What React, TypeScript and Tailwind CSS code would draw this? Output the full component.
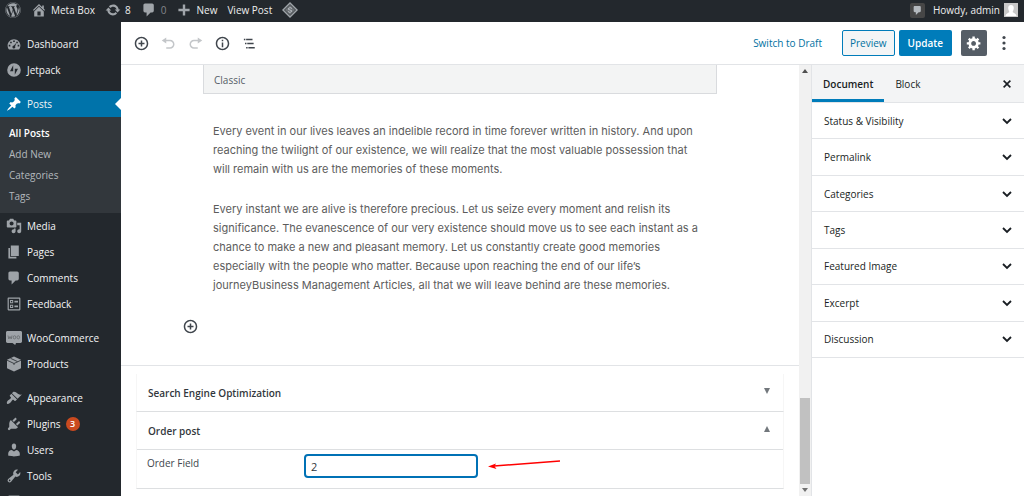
import { useState } from "react";
import type { ReactNode } from "react";
import clsx from "clsx";
import { FaWordpress } from "react-icons/fa";

const paths = {
  post: "M10.44 3.02l1.82-1.82 6.36 6.35-1.83 1.82c-1.05-.68-2.48-.57-3.41.36l-.75.75c-.92.93-1.04 2.35-.35 3.41l-1.83 1.82-2.41-2.41-2.8 2.79c-.42.42-3.38 2.71-3.8 2.29s1.86-3.39 2.28-3.81l2.79-2.79L4.1 9.36l1.83-1.82c1.05.69 2.48.57 3.4-.36l.75-.75c.93-.92 1.05-2.35.36-3.41z",
  comment: "M5 2h9c1.1 0 2 .9 2 2v7c0 1.1-.9 2-2 2h-2l-5 5v-5H5c-1.1 0-2-.9-2-2V4c0-1.1.9-2 2-2z",
  page: "M6 15V2h10v13H6zm-1 1h8v2H3V5h2v11z",
  users:
    "M10 9.25c-2.27 0-2.73-3.44-2.73-3.44C7 4.02 7.82 2 9.97 2c2.16 0 2.98 2.02 2.71 3.81 0 0-.41 3.44-2.68 3.44zm0 2.57L12.72 10c2.39 0 4.52 2.33 4.52 4.53v2.49s-3.65 1.13-7.24 1.13c-3.65 0-7.24-1.13-7.24-1.13v-2.49c0-2.25 1.94-4.48 4.47-4.48z",
  tools:
    "M16.68 9.77c-1.34 1.34-3.3 1.67-4.95.99l-5.41 6.52c-.99.99-2.59.99-3.58 0s-.99-2.59 0-3.57l6.52-5.42c-.68-1.65-.35-3.61.99-4.95 1.28-1.28 3.12-1.62 4.72-1.06l-2.89 2.89 2.82 2.82 2.86-2.87c.53 1.58.18 3.39-1.08 4.65zM3.81 16.21c.4.39 1.04.39 1.43 0 .4-.4.4-1.04 0-1.43-.39-.4-1.03-.4-1.43 0-.39.39-.39 1.03 0 1.43z",
  plugins:
    "M13.11 4.36L9.87 7.6 8 5.73l3.24-3.24c.35-.34 1.05-.2 1.56.32.52.51.66 1.21.31 1.55zm-8 1.77l.91-1.12 9.01 9.01-1.19.84c-.71.71-2.63 1.16-3.82 1.16H6.14L4.9 17.26c-.59.59-1.54.59-2.12 0-.59-.58-.59-1.53 0-2.12l1.24-1.24v-3.88c0-1.13.4-3.19 1.09-3.89zm7.26 3.97l3.24-3.24c.34-.35 1.04-.21 1.55.31.52.51.66 1.21.31 1.55l-3.24 3.25z",
  appearance:
    "M14.48 11.06L7.41 3.99l1.5-1.5c.5-.56 2.3-.47 3.51.32 1.21.8 1.43 1.28 2.91 2.1 1.18.64 2.45 1.26 4.45.85zm-.71.71L6.7 4.7 4.93 6.47c-.39.39-.39 1.02 0 1.41l1.06 1.06c.39.39.39 1.03 0 1.42-.6.6-1.43 1.11-2.21 1.69-.35.26-.7.53-1.01.84C1.43 14.23.4 16.08 1.4 17.07c.99 1 2.84-.03 4.18-1.36.31-.31.58-.66.85-1.02.57-.78 1.08-1.61 1.69-2.21.39-.39 1.02-.39 1.41 0l1.06 1.06c.39.39 1.02.39 1.41 0z",
  media:
    "M13 11V4c0-.55-.45-1-1-1h-1.67L9 1H5L3.67 3H2c-.55 0-1 .45-1 1v7c0 .55.45 1 1 1h10c.55 0 1-.45 1-1zM7 4.5c1.38 0 2.5 1.12 2.5 2.5S8.38 9.5 7 9.5 4.5 8.38 4.5 7 5.62 4.5 7 4.5zM14 6h5v10.5c0 1.38-1.12 2.5-2.5 2.5S14 17.88 14 16.5s1.12-2.5 2.5-2.5c.17 0 .34.02.5.05V9h-3V6zm-4 8.05V13h2v3.5c0 1.38-1.12 2.5-2.5 2.5S7 17.88 7 16.5 8.12 14 9.5 14c.17 0 .34.02.5.05z",
  dashboard:
    "M3.76 17h12.48c1.1-1.38 1.76-3.12 1.76-5.01 0-4.41-3.58-8-8-8s-8 3.59-8 8c0 1.89.66 3.63 1.76 5.01zM9 5.5h2v2H9zM5.2 7.2h2v2h-2zM12.8 7.2h2v2h-2zM3.4 11h2v2h-2zM14.6 11h2v2h-2zM13 8.3l-1.6 4.6a1.8 1.8 0 1 1-1.5-.9z",
  home: "M16 8.5l1.53 1.53-1.06 1.06L10 4.6l-6.47 6.49-1.06-1.06L10 2.5l4 4v-2h2v4zm-6-2.46l6 5.99V18H4v-5.97zM12 17v-5H8v5h4z",
  update:
    "M10.2 3.28c3.53 0 6.43 2.61 6.92 6h2.08l-3.5 4-3.5-4h2.32c-.45-1.97-2.21-3.45-4.32-3.45-1.45 0-2.73.71-3.54 1.78L4.95 5.66C6.23 4.2 8.11 3.28 10.2 3.28zm-.4 13.44c-3.52 0-6.43-2.61-6.92-6H.8l3.5-4c1.17 1.33 2.33 2.67 3.5 4H5.48c.45 1.97 2.21 3.45 4.32 3.45 1.45 0 2.73-.71 3.54-1.78l1.71 1.95c-1.28 1.46-3.15 2.38-5.25 2.38z",
  plus: "M17 8.5v3h-5.5V17h-3v-5.5H3v-3h5.5V3h3v5.5z",
  insert:
    "M10 1c-5 0-9 4-9 9s4 9 9 9 9-4 9-9-4-9-9-9zm0 16c-3.9 0-7-3.1-7-7s3.1-7 7-7 7 3.1 7 7-3.1 7-7 7zm1-11H9v3H6v2h3v3h2v-3h3V9h-3V6z",
  info: "M10 1c-5 0-9 4-9 9s4 9 9 9 9-4 9-9-4-9-9-9zm0 16c-3.9 0-7-3.1-7-7s3.1-7 7-7 7 3.1 7 7-3.1 7-7 7zM9 5h2v2H9zM9 8.5h2V15H9z",
  undo: "M12 5H7V2L1 6l6 4V7h5c2.2 0 4 1.8 4 4s-1.8 4-4 4H7v2h5c3.3 0 6-2.7 6-6s-2.7-6-6-6z",
  redo: "M8 5h5V2l6 4-6 4V7H8c-2.2 0-4 1.8-4 4s1.8 4 4 4h5v2H8c-3.3 0-6-2.7-6-6s2.7-6 6-6z",
  outline: "M2.5 3.500h2v2h-2zM5.500 3.500h8.500v2H5.500zM4 9h2v2H4zM7 9h8.500v2H7zM5.500 14.500h2v2h-2zM8.500 14.500H17v2H8.500z",
  gear: "M18 12h-2.180c-.17.7-.44 1.350-.81 1.930l1.540 1.540-2.100 2.100-1.540-1.540c-.58.36-1.230.63-1.910.79V19H8v-2.180c-.68-.16-1.330-.43-1.910-.79l-1.540 1.540-2.120-2.120 1.540-1.540c-.36-.58-.63-1.230-.79-1.910H1V9.030h2.170c.16-.7.44-1.350.8-1.940L2.430 5.550l2.100-2.100 1.540 1.540c.58-.37 1.240-.64 1.930-.81V2h3v2.180c.68.16 1.330.43 1.910.79l1.540-1.540 2.120 2.120-1.540 1.540c.36.59.64 1.240.8 1.940H18V12zm-8.500 1.500c1.660 0 3-1.340 3-3s-1.340-3-3-3-3 1.340-3 3 1.340 3 3 3z",
  close:
    "M14.950 6.460L11.410 10l3.540 3.540-1.410 1.410L10 11.420l-3.530 3.530-1.420-1.420L8.580 10 5.050 6.470l1.420-1.420L10 8.580l3.540-3.530z",
  jetpack: "M10 1.500a8.500 8.500 0 1 0 0 17 8.500 8.500 0 0 0 0-17zM9 11.500H5L9 4zM11 16V8.500h4z",
  feedback:
    "M3 2h14c.6 0 1 .4 1 1v14c0 .6-.4 1-1 1H3c-.6 0-1-.4-1-1V3c0-.6.4-1 1-1zm.5 1.500v13h13v-13zM5 5h4v4H5zm1.200 1.200v1.600h1.600V6.200zM5 11h4v4H5zm1.200 1.200v1.600h1.600v-1.600zM10.500 6H15v2h-4.500zM10.500 12H15v2h-4.500z",
  settings: "M4 2h12c.6 0 1 .4 1 1v14c0 .6-.4 1-1 1H4c-.6 0-1-.4-1-1V3c0-.6.4-1 1-1z",
};

type IconName = keyof typeof paths;

const Icon = ({ name, className = "size-4" }: { name: IconName; className?: string }) => (
  <svg viewBox="0 0 20 20" fill="currentColor" fillRule="evenodd" className={clsx("shrink-0", className)} aria-hidden="true">
    <path d={paths[name]} />
  </svg>
);

const WooIcon = () => (
  <svg viewBox="0 0 16 16" className="size-4 shrink-0" aria-hidden="true">
    <path fill="currentColor" d="M1.500 1h13c.8 0 1.500.6 1.500 1.400v9.200c0 .8-.7 1.400-1.500 1.400H10l-.8 2-2.700-2h-5C.7 13 0 12.400 0 11.600V2.400C0 1.600.7 1 1.500 1z" />
    <path fill="none" stroke="#6c7074" strokeWidth=".9" d="M2 5.500l.8 3.500 1.200-2.500L5.200 9 6 5.500" />
    <ellipse cx="8.500" cy="7.300" rx="1.300" ry="1.600" fill="none" stroke="#6c7074" strokeWidth=".9" />
    <ellipse cx="12.300" cy="7.300" rx="1.300" ry="1.600" fill="none" stroke="#6c7074" strokeWidth=".9" />
  </svg>
);

const ProductsIcon = () => (
  <svg viewBox="0 0 16 16" className="size-4 shrink-0" aria-hidden="true">
    <path fill="currentColor" d="M8 .5l7 3.300v8.400l-7 3.300-7-3.300V3.800z" />
    <path fill="none" stroke="#23282d" strokeWidth=".8" d="M1 4.200l7 3.300 7-3.300M4.500 2.300l7 3.300M8 7.500v1.500" />
  </svg>
);

interface MenuItemProps {
  label?: string;
  icon: ReactNode;
  active?: boolean;
  count?: number;
}

const MenuItem = ({ label, icon, active, count }: MenuItemProps) => (
  <li>
    <a
      href="#"
      className={clsx("relative flex h-[26px] items-center gap-[5px] pl-[6px]", active ? "bg-[#0073aa] text-white" : "text-[#9ea3a8]")}
    >
      {icon}
      <span className="text-[#f3f4f5]">{label}</span>
      {count && (
        <span className="flex size-[14px] items-center justify-center rounded-full bg-[#ca4a1f] text-[9px] font-semibold text-white">{count}</span>
      )}
      {active && <span className="absolute right-0 border-y-[6px] border-r-[6px] border-y-transparent border-r-white" />}
    </a>
  </li>
);

const AdminBar = () => (
  <header className="flex h-[22px] shrink-0 items-center justify-between bg-[#23282d] pr-[6px] pb-[2px] pl-[5px] font-medium text-[#eeeeee]">
    <nav className="flex items-center" aria-label="Toolbar">
      <a href="#" aria-label="About WordPress" className="mr-[10px] text-[#a0a5aa]">
        <FaWordpress className="size-4" />
      </a>
      <a href="#" className="mr-[10px] flex items-center gap-1">
        <Icon name="home" className="size-4 text-[#a0a5aa]" />
        Meta Box
      </a>
      <a href="#" className="mr-[10px] flex items-center gap-1">
        <Icon name="update" className="size-4 text-[#a0a5aa]" />8
      </a>
      <a href="#" className="mr-[10px] flex items-center gap-1 text-[#83878b]">
        <Icon name="comment" className="size-4 text-[#a0a5aa]" />0
      </a>
      <a href="#" className="mr-[10px] flex items-center gap-1">
        <Icon name="plus" className="size-4 text-[#a0a5aa]" />
        New
      </a>
      <a href="#" className="mr-[10px]">
        View Post
      </a>
      <a href="#" aria-label="Performance">
        <svg viewBox="0 0 16 16" className="size-4" aria-hidden="true">
          <path fill="#a0a5aa" d="M8 0l8 8-8 8-8-8z" />
          <path fill="#6d7276" stroke="#3c4145" d="M8 2.500L13.500 8 8 13.500 2.500 8z" />
          <path fill="none" stroke="#b4b9be" d="M10 6.500L8 5.500 6 7l4 2-2 1.500-2-1" />
        </svg>
      </a>
    </nav>
    <div className="flex items-center gap-2">
      <a href="#" aria-label="Notifications" className="flex size-[15px] items-center justify-center rounded-xs bg-[#464646] text-[#b4b9be]">
        <Icon name="comment" className="size-[11px]" />
      </a>
      <a href="#" className="flex items-center gap-1">
        Howdy, admin
        <svg viewBox="0 0 14 14" className="size-[14px]" aria-hidden="true">
          <path fill="#c8c8c8" d="M0 0h14v14H0z" />
          <path fill="#fff" d="M7 2c1.700 0 2.800 1.200 2.800 3S8.700 8.300 8.700 9c0 .8 3.300 1 3.800 4H1.500c.5-3 3.800-3.200 3.800-4 0-.7-1.100-2.200-1.100-4S5.300 2 7 2z" />
        </svg>
      </a>
    </div>
  </header>
);

const AdminMenu = () => (
  <nav className="w-[121px] shrink-0 overflow-hidden bg-[#23282d] pt-[9px] font-medium" aria-label="Main menu">
    <ul>
      <MenuItem label="Dashboard" icon={<Icon name="dashboard" />} />
      <MenuItem label="Jetpack" icon={<Icon name="jetpack" />} />
    </ul>
    <ul className="mt-2">
      <MenuItem label="Posts" icon={<Icon name="post" />} active />
      <li>
        <ul className="bg-[#32373c] pt-[5px] pb-[7px] font-normal text-[#b4b9be]">
          {["All Posts", "Add New", "Categories", "Tags"].map((item, i) => (
            <li key={item}>
              <a href="#" className={clsx("flex h-[21px] items-center pl-[9px]", i === 0 && "font-semibold text-white")}>
                {item}
              </a>
            </li>
          ))}
        </ul>
      </li>
      <MenuItem label="Media" icon={<Icon name="media" />} />
      <MenuItem label="Pages" icon={<Icon name="page" />} />
      <MenuItem label="Comments" icon={<Icon name="comment" />} />
      <MenuItem label="Feedback" icon={<Icon name="feedback" />} />
    </ul>
    <ul className="mt-2">
      <MenuItem label="WooCommerce" icon={<WooIcon />} />
      <MenuItem label="Products" icon={<ProductsIcon />} />
    </ul>
    <ul className="mt-2">
      <MenuItem label="Appearance" icon={<Icon name="appearance" />} />
      <MenuItem label="Plugins" icon={<Icon name="plugins" />} count={3} />
      <MenuItem label="Users" icon={<Icon name="users" />} />
      <MenuItem label="Tools" icon={<Icon name="tools" />} />
      <MenuItem icon={<Icon name="settings" />} />
    </ul>
  </nav>
);

const tools: { name: IconName; label: string; disabled?: boolean }[] = [
  { name: "insert", label: "Add block" },
  { name: "undo", label: "Undo", disabled: true },
  { name: "redo", label: "Redo", disabled: true },
  { name: "info", label: "Content structure" },
  { name: "outline", label: "Block navigation" },
];

const EditorHeader = () => (
  <div className="flex h-[43px] shrink-0 items-center justify-between border-b border-[#e2e4e7] pr-3 pl-[7px]">
    <div className="flex">
      {tools.map((tool) => (
        <button
          key={tool.name}
          type="button"
          aria-label={tool.label}
          disabled={tool.disabled}
          className="flex h-[26px] w-[27px] items-center justify-center text-[#40464d] disabled:text-[#c3c6c9]"
        >
          <Icon name={tool.name} className="size-[15px]" />
        </button>
      ))}
    </div>
    <div className="flex items-center">
      <button type="button" className="mr-5 text-[#0071a1]">
        Switch to Draft
      </button>
      <button type="button" className="mr-1 h-[26px] rounded-xs border border-[#007cba] bg-[#f3f5f6] px-[7px] text-[#0071a1]">
        Preview
      </button>
      <button type="button" className="mr-[9px] h-[26px] rounded-xs bg-[#007cba] px-[9px] font-semibold text-white">
        Update
      </button>
      <button type="button" aria-label="Settings" className="mr-[9px] flex size-[26px] items-center justify-center rounded-xs bg-[#555d66] text-white">
        <Icon name="gear" />
      </button>
      <button type="button" aria-label="More tools" className="text-[#40464d]">
        <svg viewBox="0 0 16 16" fill="currentColor" className="size-4" aria-hidden="true">
          <circle cx="8" cy="2.500" r="1.600" />
          <circle cx="8" cy="8" r="1.600" />
          <circle cx="8" cy="13.500" r="1.600" />
        </svg>
      </button>
    </div>
  </div>
);

const MetaBoxTitle = ({ title, open }: { title: string; open?: boolean }) => (
  <h2>
    <button
      type="button"
      aria-expanded={!!open}
      className="flex h-[37px] w-full items-center justify-between pr-3 pl-[11px] font-semibold text-[#32373c]"
    >
      {title}
      <svg viewBox="0 0 6 6" className="mr-px mb-1 size-[6px] text-[#72777c]" fill="currentColor" aria-hidden="true">
        <path d={open ? "M3 0l3 6H0z" : "M0 0h6L3 6z"} />
      </svg>
    </button>
  </h2>
);

const MetaBoxes = () => {
  const [order, setOrder] = useState("2");

  return (
    <div className="border-t border-[#e2e4e7] px-[15px] pt-2 pb-[7px]">
      <section className="border-x border-b border-x-[#f6f6f6] border-b-[#dddfe1]">
        <MetaBoxTitle title="Search Engine Optimization" />
      </section>
      <section className="border-x border-b border-x-[#f6f6f6] border-b-[#dddfe1]">
        <MetaBoxTitle title="Order post" open />
        <div className="flex h-[39px] items-start border-t border-[#dddfe1] px-[10px] pt-1 text-[#40464d]">
          <label htmlFor="order-field" className="w-[157px] shrink-0 pt-px font-medium">
            Order Field
          </label>
          <input
            id="order-field"
            type="text"
            value={order}
            onChange={(e) => setOrder(e.target.value)}
            className="h-6 w-[174px] rounded-sm border-2 border-[#0071b5] px-[5px] text-[11px] text-[#32373c] outline-none"
          />
          <svg viewBox="0 0 74 16" className="mt-[2px] ml-2 h-4 w-[74px] shrink-0" aria-hidden="true">
            <path d="M8 10L74 5" stroke="#f00" strokeWidth="1.500" />
            <path d="M2 10.500L10 7.500 8.500 10.200 10.500 13z" fill="#f00" />
          </svg>
        </div>
      </section>
    </div>
  );
};

const Editor = () => (
  <main className="flex min-w-0 flex-1 flex-col bg-white">
    <div className="flex-1">
      <div className="mx-auto w-[514px] border border-t-0 border-[#d9dbde] bg-[#f3f4f4] px-[10px] pt-[7px] pb-[5px] leading-[16px] text-[#555d66]">
        Classic
      </div>
      <article className="mx-auto mt-[28px] w-[514px] space-y-[21px] px-[10px] font-['Inter',sans-serif] text-[11px] leading-[19px] whitespace-nowrap text-[#5c5c5c]">
        <p>
          Every event in our lives leaves an indelible record in time forever written in history. And upon
          <br />
          reaching the twilight of our existence, we will realize that the most valuable possession that
          <br />
          will remain with us are the memories of these moments.
        </p>
        <p>
          Every instant we are alive is therefore precious. Let us seize every moment and relish its
          <br />
          significance. The evanescence of our very existence should move us to see each instant as a
          <br />
          chance to make a new and pleasant memory. Let us constantly create good memories
          <br />
          especially with the people who matter. Because upon reaching the end of our life’s
          <br />
          journeyBusiness Management Articles, all that we will leave behind are these memories.
        </p>
      </article>
      <div className="mx-auto mt-6 w-[554px]">
        <button type="button" aria-label="Add block" className="flex text-[#40464d]">
          <Icon name="insert" className="size-[15px]" />
        </button>
      </div>
    </div>
    <MetaBoxes />
  </main>
);

const Scrollbar = () => (
  <div className="flex w-[13px] shrink-0 flex-col items-center border-r border-[#e2e4e7] bg-[#f1f1f1] py-1" aria-hidden="true">
    <span className="border-x-[3px] border-b-[4px] border-x-transparent border-b-[#505050]" />
    <span className="mt-auto h-[86px] w-[10px] bg-[#c1c1c1]" />
    <span className="mt-1 border-x-[3px] border-t-[4px] border-x-transparent border-t-[#707070]" />
  </div>
);

const panels = ["Status & Visibility", "Permalink", "Categories", "Tags", "Featured Image", "Excerpt", "Discussion"];

const DocumentSidebar = () => (
  <aside className="w-[212px] shrink-0 bg-white font-medium text-[#191e23]">
    <div className="flex h-[38px] items-stretch border-b border-[#e2e4e7] bg-[#f3f4f5]">
      <button type="button" className="border-b-[3px] border-[#007cba] px-[11px] pt-[3px] font-semibold">
        Document
      </button>
      <button type="button" className="px-[11px]">
        Block
      </button>
      <button type="button" aria-label="Close settings" className="mr-[9px] ml-auto">
        <Icon name="close" />
      </button>
    </div>
    <div className="grid h-[255px] auto-rows-fr">
      {panels.map((panel) => (
        <button key={panel} type="button" className="flex items-center justify-between border-b border-[#e2e4e7] pr-[11px] pl-3">
          {panel}
          <svg viewBox="0 0 12 12" className="size-3" fill="none" stroke="currentColor" strokeWidth="1.800" aria-hidden="true">
            <path d="M2 4l4 4 4-4" />
          </svg>
        </button>
      ))}
    </div>
  </aside>
);

export default function App() {
  return (
    <div className="flex h-screen flex-col overflow-hidden bg-white font-['Open_Sans',sans-serif] text-[10px] leading-[16px]">
      <AdminBar />
      <div className="flex min-h-0 flex-1">
        <AdminMenu />
        <div className="flex min-w-0 flex-1 flex-col">
          <EditorHeader />
          <div className="flex min-h-0 flex-1">
            <Editor />
            <Scrollbar />
            <DocumentSidebar />
          </div>
        </div>
      </div>
    </div>
  );
}
